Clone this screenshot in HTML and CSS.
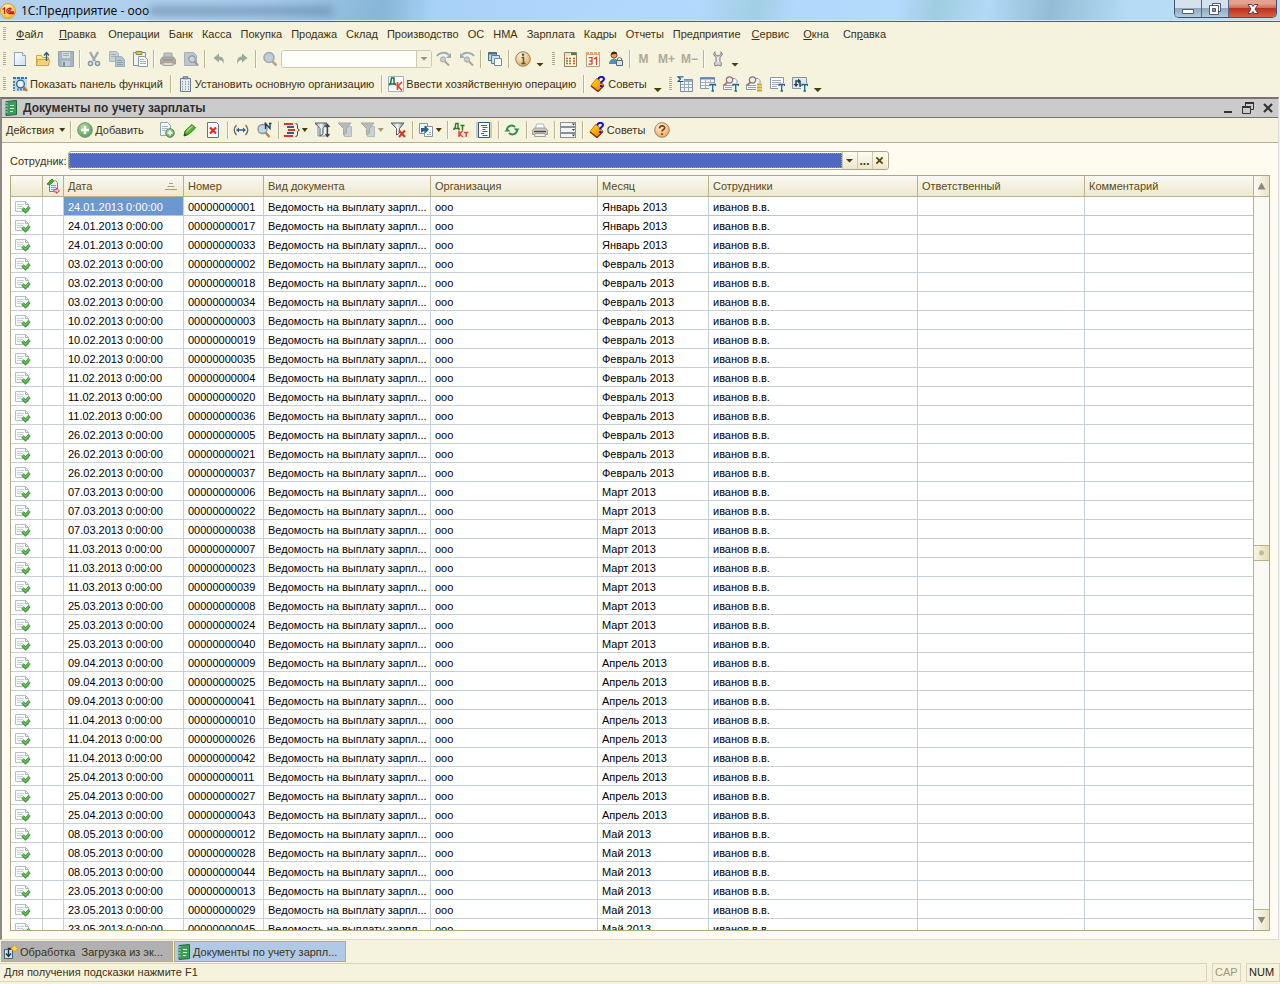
FILE: index.html
```html
<!DOCTYPE html>
<html lang="ru">
<head>
<meta charset="utf-8">
<title>1С:Предприятие - ооо</title>
<link rel="stylesheet" href="styles.css">
</head>
<body>
<svg class="sprite" aria-hidden="true">
  <defs>
    <linearGradient id="g-page" x1="0" y1="0" x2="1" y2="1"><stop offset="0" stop-color="#fff"/><stop offset="1" stop-color="#cfe0ef"/></linearGradient>
    <linearGradient id="g-folder" x1="0" y1="0" x2="0" y2="1"><stop offset="0" stop-color="#fdf0a8"/><stop offset="1" stop-color="#ecc25c"/></linearGradient>
    <radialGradient id="g-orange" cx=".4" cy=".3" r=".8"><stop offset="0" stop-color="#fff3dc"/><stop offset="1" stop-color="#ee9c4c"/></radialGradient>
    <radialGradient id="g-green" cx=".4" cy=".3" r=".8"><stop offset="0" stop-color="#b4dca4"/><stop offset="1" stop-color="#4f9a46"/></radialGradient>
    <radialGradient id="g-logo" cx=".4" cy=".3" r=".8"><stop offset="0" stop-color="#fff9b0"/><stop offset="1" stop-color="#f5b42a"/></radialGradient>
    <linearGradient id="g-book" x1="0" y1="0" x2="1" y2="1"><stop offset="0" stop-color="#ffe600"/><stop offset="1" stop-color="#ff6a00"/></linearGradient>
    <linearGradient id="g-fun" x1="0" y1="0" x2="1" y2="0"><stop offset="0" stop-color="#8f979c"/><stop offset=".5" stop-color="#f4f6f6"/><stop offset="1" stop-color="#747c82"/></linearGradient>
  </defs>
  <symbol id="i-logo" viewBox="0 0 16 16"><circle cx="8" cy="8" r="7.5" fill="url(#g-logo)" stroke="#d99a3a"/><path d="M2.5 6.5l2-1.5v6M11.5 6.3a2.6 2.6 0 1 0-1.5 4.2h4.5M10.5 7.6a1 1 0 1 0-.5 1.4h4" fill="none" stroke="#d8151b" stroke-width="1.3"/></symbol>
  <symbol id="i-new" viewBox="0 0 16 16"><path d="M2.500 1.500h8l3 3v10h-11z" fill="url(#g-page)" stroke="#8ba5bd"/><path d="M10.500 1.500v3h3" fill="#eef5fa" stroke="#8ba5bd"/><path d="M2 14.500h12" stroke="#56748f"/></symbol>
  <symbol id="i-open" viewBox="0 0 16 16"><path d="M1.500 14.500v-10h5l1 2h6v8z" fill="url(#g-folder)" stroke="#cfa348"/><path d="M1.500 14.500l1-6h12l-1 6z" fill="#f5d477" stroke="#d0a546"/><path d="M11.500 10V2M9 4.500L11.500 1.500 14 4.500" fill="none" stroke="#315b77" stroke-width="1.300"/></symbol>
  <symbol id="i-save" viewBox="0 0 16 16"><path d="M.500.500h15v15h-14l-1-1z" fill="#a6b5c0" stroke="#93a2af"/><path d="M4 1h8v6H4z" fill="#d8dddb"/><path d="M5 2.500h6M5 4.500h6" stroke="#9cabb5"/><path d="M4 10h8v5H4z" fill="#c5ced2"/><path d="M5 11h2v4H5z" fill="#7f909d"/></symbol>
  <symbol id="i-cut" viewBox="0 0 16 16"><path d="M4 1l5 9M12 1L7 10" stroke="#9aa8b2" stroke-width="2.200"/><circle cx="4.500" cy="12.500" r="2" fill="none" stroke="#8397a8" stroke-width="1.600"/><circle cx="11.500" cy="12.500" r="2" fill="none" stroke="#8397a8" stroke-width="1.600"/></symbol>
  <symbol id="i-copy" viewBox="0 0 16 16"><path d="M.500.500h7l2 2v8h-9z" fill="#c6d0d5" stroke="#aab7c0"/><path d="M2 3.500h5M2 5.500h5" stroke="#a2b0ba"/><path d="M6.500 5.500h6l3 3v7h-9z" fill="#b7c3cc" stroke="#9dacb8"/><path d="M8 9.500h5M8 11.500h6M8 13.500h6" stroke="#8da0af"/></symbol>
  <symbol id="i-paste" viewBox="0 0 16 16"><path d="M1.500 1.500h12v13h-12z" fill="#eef3f5" stroke="#7892a6"/><path d="M4 .500h6v3H4z" fill="#d9c64b" stroke="#8d8742"/><path d="M6.500 5.500h6l3 3v7h-9z" fill="#fff" stroke="#7f9cb4"/><path d="M8 8.500h4M8 10.500h6M8 12.500h6" stroke="#9fb5c5"/></symbol>
  <symbol id="i-print-off" viewBox="0 0 16 16"><path d="M4 2h8v5H4z" fill="#bcc5cc" stroke="#9daab3"/><path d="M2.500 6h11l2 3v4H.500V9z" fill="#b3aaa2" stroke="#a29c96"/><path d="M3 9h10" stroke="#8c8985"/><path d="M3 11.500h10v3H3z" fill="#d9d9d3" stroke="#a5a49f"/></symbol>
  <symbol id="i-preview" viewBox="0 0 16 16"><path d="M1.500 1.500h9l3 3v10h-12z" fill="#bcc6cc" stroke="#a5b2bb"/><circle cx="9" cy="8" r="3.200" fill="#ced6da" stroke="#8e9cab" stroke-width="1.200"/><path d="M11.500 10.500l3.500 4" stroke="#b39486" stroke-width="2"/></symbol>
  <symbol id="i-undo" viewBox="0 0 16 16"><path d="M2.500 7L8 2.500v3c4 0 5.500 3 4.500 7.500C12 10 10.500 9 8 9v2.500z" fill="#98ab9b"/></symbol>
  <symbol id="i-redo" viewBox="0 0 16 16"><path d="M13.500 7L8 2.500v3c-4 0-5.500 3-4.500 7.500C4 10 5.500 9 8 9v2.500z" fill="#98ab9b"/></symbol>
  <symbol id="i-find" viewBox="0 0 16 16"><circle cx="7" cy="6.500" r="5" fill="#bccddb" stroke="#a3a9af" stroke-width="1.600"/><path d="M10.500 10.500l4 4" stroke="#bba090" stroke-width="2.500"/></symbol>
  <symbol id="i-findnext" viewBox="0 0 16 16"><path d="M1 5c3-4 9-4 12-1" fill="none" stroke="#9cadb0" stroke-width="2"/><path d="M15 2v5h-5z" fill="#9cadb0"/><circle cx="7" cy="8.500" r="2.600" fill="#c1cdd3" stroke="#a0a9ae"/><path d="M9 10.500l4 4" stroke="#b9a190" stroke-width="2"/></symbol>
  <symbol id="i-findprev" viewBox="0 0 16 16"><path d="M15 5C12 1 6 1 3 4" fill="none" stroke="#9cadb0" stroke-width="2"/><path d="M1 2v5h5z" fill="#9cadb0"/><circle cx="8" cy="8.500" r="2.600" fill="#c1cdd3" stroke="#a0a9ae"/><path d="M10 10.500l4 4" stroke="#b9a190" stroke-width="2"/></symbol>
  <symbol id="i-windows" viewBox="0 0 16 16"><path d="M1.500 1.500h8v8h-8z" fill="#bed4e5" stroke="#4d708a"/><path d="M1 2.500h9" stroke="#4d708a" stroke-width="2"/><path d="M4.500 4.500h8v8h-8z" fill="#d1e2ee" stroke="#56809b"/><path d="M7.500 7.500h7v7h-7z" fill="#fff" stroke="#6b8ba4"/></symbol>
  <symbol id="i-info" viewBox="0 0 16 16"><circle cx="8" cy="8" r="7.300" fill="url(#g-orange)" stroke="#8e8a62"/><path d="M6.500 6.500H8.500v6M6.300 12.500h4.200" fill="none" stroke="#356832" stroke-width="1.500"/><circle cx="8" cy="3.800" r="1.200" fill="#356832"/></symbol>
  <symbol id="i-calc" viewBox="0 0 16 16"><path d="M2.500 1.500h12v14h-12z" fill="#fff4d6" stroke="#8c8262"/><path d="M3 2h11v3H3z" fill="#e9e2c4"/><path d="M9 2h5v2H9z" fill="#3e8a35"/><path d="M4 7.500h6M4 10h6M4 12.500h6" stroke="#a56d35" stroke-width="1.500" stroke-dasharray="2 1"/><path d="M11 7.500h2M11 10h2M11 12.500h2" stroke="#dc4c24" stroke-width="1.500"/></symbol>
  <symbol id="i-cal" viewBox="0 0 16 16"><path d="M1.500 1.500h13v14h-13z" fill="#fffdf5" stroke="#b29d79"/><path d="M1 1h14v3H1z" fill="#eba36c"/><path d="M4.500 0v3M8.500 0v3M12.500 0v3" stroke="#fff"/><path d="M3.500 6.600h3.500v7M4.500 10H7M3.500 13.200H7M9 8l2.500-1.500V14" fill="none" stroke="#e23c1e" stroke-width="1.300"/></symbol>
  <symbol id="i-user" viewBox="0 0 16 16"><circle cx="6" cy="4" r="3" fill="#efa44c" stroke="#7b4d2a"/><path d="M3 4c0-4 6-4 6-1-3 0-4 0-6 1" fill="#3b2a1c"/><path d="M1 13c0-7 10-7 10 0z" fill="#548fae"/><path d="M8.500 9.500h6v5h-6z" fill="#dbe4ee" stroke="#52687f"/><path d="M9.500 9V7.500q2-2 4 0V9" fill="none" stroke="#52687f"/></symbol>
  <symbol id="i-wrench" viewBox="0 0 16 16"><path d="M5 .800L3.500 3.500 6 6.500v4L4.500 12l.500 3 3-1 3 1 .500-3-1.500-1.500v-4l2.500-3L11 .800V3.500L8 5 5 3.500z" fill="#d4d6d4" stroke="#7e8382"/><path d="M8 6v5" stroke="#fff"/></symbol>
  <symbol id="i-panel" viewBox="0 0 16 16"><path d="M1 1h14v14H1z" fill="#bfd9ee"/><path d="M1 2h14" stroke="#2d74c5" stroke-width="2" stroke-dasharray="3 1"/><path d="M2 5v10M5 13.500h9" stroke="#4b83b7" stroke-width="2" stroke-dasharray="2 1"/><circle cx="8.500" cy="8" r="3.800" fill="#e7f3fc" stroke="#31608d" stroke-width="1.300"/><path d="M11.500 11l3.500 4" stroke="#c8722f" stroke-width="2.200"/></symbol>
  <symbol id="i-org" viewBox="0 0 16 16"><path d="M3.500 2.500h10v13h-10z" fill="#e9edf2" stroke="#697a8c"/><path d="M6 .800h5v2H6z" fill="#a8b2bd" stroke="#697a8c"/><path d="M5.500 5v9M8.500 5v9M11.500 5v9" stroke="#8b9dad" stroke-dasharray="1.500 1"/></symbol>
  <symbol id="i-dk" viewBox="0 0 16 16"><path d="M.500.500h15v15H.500z" fill="#fff" stroke="#9cb2cb"/><path d="M1.500 9.500V8h6v1.500M2.500 8L3.500 2h2.500v6" fill="none" stroke="#1d7130" stroke-width="1.500"/><path d="M9.500 6v8M14 6l-4 4 4 4.500" fill="none" stroke="#ef3c2c" stroke-width="1.700"/></symbol>
  <symbol id="i-tips" viewBox="0 0 16 16"><path d="M1 9.500L7 2l7 7-5.500 6.500z" fill="url(#g-book)" stroke="#d07a10"/><path d="M1 10l7 5.500 6-6" fill="none" stroke="#7c2d00" stroke-width="1.300"/><path d="M8.500 3.500C8.500 0 14 0 14 3c0 2-3 2-3 4.500" fill="none" stroke="#1410dd" stroke-width="2"/><path d="M10 9h2.400v2H10z" fill="#1410dd"/></symbol>
  <symbol id="i-tab-sum" viewBox="0 0 16 16"><path d="M3.500 3.500h12v12h-12z" fill="#f2f5f8" stroke="#7d8da0"/><path d="M4 4h11v2H4z" fill="#98abc0"/><path d="M7.500 5v10M11.500 5v10M4 8.500h11M4 11.500h11" stroke="#9aabba"/><path d="M0 0h7v6H0z" fill="#f5f2dd"/><path d="M6.500.800H1L3.500 3 1 5.500h5.500" fill="none" stroke="#186091" stroke-width="1.200"/></symbol>
  <symbol id="i-tab-t" viewBox="0 0 16 16"><path d="M.500 1.500h14v11h-14z" fill="#f5f7f9" stroke="#8796a8"/><path d="M0 2.500h15" stroke="#6389b1" stroke-width="2"/><path d="M5.500 4v8M10.500 4v8M1 6.500h13M1 9.500h13" stroke="#a4b2c0"/><use href="#p-t"/></symbol>
  <symbol id="p-t" viewBox="0 0 16 16"><path d="M9 7h7v9H9z" fill="#f5f2dd"/><path d="M10 10V8.500h5.500V10M12.700 8.500v6.500M11.500 15h2.500" fill="none" stroke="#1c6795" stroke-width="1.300"/></symbol>
  <symbol id="i-find-t" viewBox="0 0 16 16"><path d="M3 2.500h9l2 2v9H.500v-5" fill="#f7f8f8" stroke="#8a93a0"/><path d="M2 9.500h10M2 11.500h10" stroke="#98a5b2"/><circle cx="6.500" cy="4" r="3.200" fill="#e6eef4" stroke="#9a6f6a" stroke-width="1.200"/><path d="M4 6.500L1 9.500" stroke="#a6756b" stroke-width="1.800"/><use href="#p-t"/></symbol>
  <symbol id="i-find-l" viewBox="0 0 16 16"><path d="M3 2.500h9l2 2v9H.500v-5" fill="#f7f8f8" stroke="#8a93a0"/><path d="M2 9.500h8M2 11.500h8" stroke="#98a5b2"/><circle cx="6.500" cy="4" r="3.200" fill="#e6eef4" stroke="#9a6f6a" stroke-width="1.200"/><path d="M4 6.500L1 9.500" stroke="#a6756b" stroke-width="1.800"/><path d="M10 7h6v9h-6z" fill="#f5f2dd"/><path d="M11 8.500h5M11 11.500h5M11 14.500h5" stroke="#cfa222" stroke-width="2"/></symbol>
  <symbol id="i-doc-t" viewBox="0 0 16 16"><path d="M1.500 1.500h13v11h-13z" fill="#fff" stroke="#8a93a0"/><path d="M3 4.500h9M3 6.500h9M3 8.500h6M3 10.500h5" stroke="#a2aeb9"/><use href="#p-t"/></symbol>
  <symbol id="i-swap-t" viewBox="0 0 16 16"><path d="M.500 1.500h14v11H.500z" fill="#e3e8ec" stroke="#8a93a0"/><path d="M4 9V5h2.500M8 5v5h3" fill="none" stroke="#20405c" stroke-width="1.500"/><path d="M6 2.500L9 5 6 7.500zM1.500 8h5L4 11z" fill="#20405c"/><use href="#p-t"/></symbol>
  <symbol id="i-journal" viewBox="0 0 16 16"><path d="M3 1.500L13.500.500v14L3 15.500z" fill="#3d9d58" stroke="#21693a"/><path d="M2.500 3h2M2.500 6h2M2.500 9h2M2.500 12h2" stroke="#d5e6d9"/><path d="M7 5.500h4M7 8.500h4M7 11.500h3" stroke="#d8f3db" stroke-width="1.200"/></symbol>
  <symbol id="i-add" viewBox="0 0 16 16"><circle cx="8" cy="8" r="7.300" fill="url(#g-green)" stroke="#74937a"/><path d="M8 4v8M4 8h8" stroke="#fff" stroke-width="2.400"/></symbol>
  <symbol id="i-addcopy" viewBox="0 0 16 16"><path d="M1.500.500h7l3 3v10h-10z" fill="#f3f7f8" stroke="#8fa4b2"/><path d="M3 4.500h6M3 6.500h6M3 8.500h4" stroke="#a9bac4"/><circle cx="11" cy="11" r="4.300" fill="url(#g-green)" stroke="#5c8c5e"/><path d="M11 8.500v5M8.500 11h5" stroke="#fff" stroke-width="1.500"/></symbol>
  <symbol id="i-edit" viewBox="0 0 16 16"><path d="M3 9l7-6.500 3.500 3.500-7 6.500-4.500 1.500z" fill="#57b42d" stroke="#2c7417"/><path d="M4.500 9.500L10.500 4" stroke="#aee087" stroke-width="1.300"/><path d="M2 14l.600-2.500 2 1.500z" fill="#233"/></symbol>
  <symbol id="i-del" viewBox="0 0 16 16"><path d="M2.500.500h9l2 2v13h-11z" fill="#f8fafc" stroke="#53769a"/><path d="M5 5.500l6 6M11 5.500l-6 6" stroke="#e0281e" stroke-width="2.200"/></symbol>
  <symbol id="i-interval" viewBox="0 0 16 16"><path d="M3.500 3Q-1 8 3.500 13M12.500 3q4.500 5 0 10" fill="none" stroke="#666b62" stroke-width="1.300"/><path d="M4 8h8" stroke="#32608b" stroke-width="1.500"/><path d="M6 5.500v5L3 8zM10 5.500v5L13 8z" fill="#32608b"/></symbol>
  <symbol id="i-findn" viewBox="0 0 16 16"><circle cx="6.500" cy="7" r="4.500" fill="#bad9ea" stroke="#91939a" stroke-width="1.300"/><path d="M9.500 10.500l4 4.500" stroke="#bf7c55" stroke-width="2.300"/><path d="M9.500 7V1.500l4.500 5V1M8.500 1.500h2M13 1.500h2.500" fill="none" stroke="#223a55" stroke-width="1.300"/></symbol>
  <symbol id="i-hier" viewBox="0 0 16 16"><path d="M0 2h9M4 8h7M0 14h9" stroke="#df3125" stroke-width="2"/><path d="M3 5h7M3 11h7" stroke="#315f87" stroke-width="2"/><path d="M11.500 1.500q2 0 2 2v3l2 1.500-2 1.500v3q0 2-2 2" fill="none" stroke="#3d3f3b"/></symbol>
  <symbol id="i-filter" viewBox="0 0 16 16"><path d="M1 2h12v12H4V5" fill="#edf2f4" stroke="#7791a6"/><path d="M1 1h12L9 6.500V12l-3 2V6.500z" fill="url(#g-fun)" stroke="#535e66"/><path d="M13.500 3v11M11.500 5l2-2.500 2 2.500M11.500 12l2 2.500 2-2.500" fill="none" stroke="#38434c" stroke-width="1.300"/></symbol>
  <symbol id="i-filter-off" viewBox="0 0 16 16"><path d="M7.500 4.500h7v10h-7z" fill="#cbd1d2" stroke="#b1bbc0"/><path d="M1 1h13L9.500 6.500V11l-3 2V6.500z" fill="#b5bbbb" stroke="#a3abae"/></symbol>
  <symbol id="i-filter-x" viewBox="0 0 16 16"><path d="M1 1h13L9.500 6.500V11l-3 2V6.500z" fill="url(#g-fun)" stroke="#535e66"/><path d="M9 8.500l6 6.500M15 8.500L9 15" stroke="#d83224" stroke-width="2"/></symbol>
  <symbol id="i-move" viewBox="0 0 16 16"><path d="M1.500 1.500h8v10h-8z" fill="#eef4f8" stroke="#8295a4"/><path d="M6.500 4.500h8v10h-8z" fill="#fff" stroke="#8295a4"/><path d="M9 12.500h4M11 10.500h2" stroke="#9cafbe"/><path d="M3 6h4V3.500L11 7.500 7 11.500V9C5 9 4 10 3 11z" fill="#28628f"/></symbol>
  <symbol id="i-dtkt" viewBox="0 0 16 16"><path d="M1 8V6.500h5V8M2 6.500l.800-5H5v5M7.500 3.500h4M9.500 3.500V8" fill="none" stroke="#28781f" stroke-width="1.400"/><path d="M6 8.500v6.500M10 8.500L6.500 12l3.500 3M11 10.500h4.500M13.200 10.500v4.500" fill="none" stroke="#f04335" stroke-width="1.500"/></symbol>
  <symbol id="i-list" viewBox="0 0 16 16"><path d="M0 0h16v16H0z" fill="#c9c9c5"/><path d="M2.500.500h11v15h-11z" fill="#f5fbff" stroke="#395b78"/><path d="M5 3.500h6M6.500 5.500h5M6.500 7.500h3M6.500 9.500h5M5 11.500h3M6.500 13.500h5" stroke="#216c98" stroke-width="1.200"/></symbol>
  <symbol id="i-refresh" viewBox="0 0 16 16"><path d="M3 8c0-4 5-6 8-3M13 8c0 4-5 6-8 3" fill="none" stroke="#2d8b4b" stroke-width="1.800"/><path d="M9.500 6.500h6L13 9.500zM6.500 9.500h-6L3 6.500z" fill="#2d8b4b"/></symbol>
  <symbol id="i-print" viewBox="0 0 16 16"><path d="M4.500 2h7l1 4.500h-9z" fill="#fff" stroke="#a9b8c3"/><path d="M2.500 6h11l2 2.500v4H.500v-4z" fill="#cfcac2" stroke="#a09b93"/><path d="M2 9.500h12" stroke="#55524e" stroke-width="1.500"/><path d="M3 11.500h10l.500 3h-11z" fill="#f0f0ec" stroke="#a09f99"/></symbol>
  <symbol id="i-rows" viewBox="0 0 16 16"><path d="M0 0h16v16H0z" fill="#8a8f93"/><path d="M1 1h14v3H1zM1 6h14v4H1zM1 12h14v3H1z" fill="#f2f4f5"/><path d="M12 1.500h3l-1.500 2zM12 7h3l-1.500 2zM12 12.500h3l-1.500 2z" fill="#30363b"/></symbol>
  <symbol id="i-help" viewBox="0 0 16 16"><circle cx="8" cy="8" r="7.300" fill="url(#g-orange)" stroke="#a18468"/><path d="M5.500 6.500c0-3.500 5.200-3.200 5.200-.700C10.700 7.500 8 7.500 8 9.500" fill="none" stroke="#7c3d16" stroke-width="1.600"/><circle cx="8" cy="12" r="1.100" fill="#7c3d16"/></symbol>
  <symbol id="i-state" viewBox="0 0 14 16"><path d="M3.500 2.500h6l2 2v9h-8z" fill="#e5f1fa" stroke="#4d8fbc"/><path d="M5 7.500h5M5 9.500h5M5 11.500h3" stroke="#6da0c4"/><path d="M1 6l5-5 2 2-4.500 4z" fill="#49ad2c" stroke="#3a8a2a"/><path d="M7 3l2-1.500L10 4z" fill="#f4d336"/><path d="M8 11.500h2.500V10l3 2.800-3 2.700V14H8z" fill="#fcc3cc" stroke="#d8425d"/></symbol>
  <symbol id="i-doc" viewBox="0 0 16 14"><path d="M.500 1.500h10l3 3v7H.500z" fill="#fafbfb" stroke="#b4c0c8"/><path d="M10.500 1.500v3h3" fill="none" stroke="#a6b4bd"/><path d="M2 4.500h7M2 6.500h6M2 8.500h5" stroke="#c6d0d6"/><path d="M7.500 8.500l3 3 4-4.500" fill="none" stroke="#3d9236" stroke-width="3.200"/><path d="M7.500 8.300l3 3 4-4.500" fill="none" stroke="#6cc25a" stroke-width="1.400"/></symbol>
  <symbol id="i-proc" viewBox="0 0 16 16"><path d="M1.500 5.500h8v9h-8z" fill="#d6e2ec" stroke="#3f627d"/><path d="M5.500 12V4.500H9M3 9.500l2.500 3 2.500-3" fill="none" stroke="#1f3444" stroke-width="1.400"/><path d="M11.500 1L15 4.500 11.500 8 8 4.500z" fill="#ffd83a" stroke="#c69c1e"/></symbol>
  <symbol id="i-sort" viewBox="0 0 12 8"><path d="M4 1.500h4M2.500 4.500h7M0 7.500h12" stroke="#a99f6c" stroke-width="1"/></symbol>
  <symbol id="i-min" viewBox="0 0 12 12"><path d="M2 10h8" stroke="#333" stroke-width="2"/></symbol>
  <symbol id="i-restore" viewBox="0 0 12 12"><path d="M3.500 4V1.500h8v6H8.500" fill="none" stroke="#333"/><path d="M3 1h9" stroke="#333" stroke-width="2"/><path d="M.500 4.500h8v7h-8z" fill="none" stroke="#333"/><path d="M0 5h9" stroke="#333" stroke-width="2"/></symbol>
  <symbol id="i-close" viewBox="0 0 12 12"><path d="M2 2l8 8M10 2l-8 8" stroke="#333" stroke-width="2.200"/></symbol>
  <symbol id="i-wmin" viewBox="0 0 14 12"><path d="M1.500 6.500h11v4h-11z" fill="#fff" stroke="#4e5b70"/></symbol>
  <symbol id="i-wrest" viewBox="0 0 14 12"><path d="M4.500.500h8v8h-8z" fill="#fff" stroke="#4e5b70"/><path d="M1.500 2.500h9v9h-9z" fill="#fff" stroke="#4e5b70"/><path d="M4.500 5.500h3v3h-3z" fill="#8199b2" stroke="#4e5b70"/></symbol>
  <symbol id="i-wclose" viewBox="0 0 14 12"><path d="M2 1.500h3.500L7 3.500l1.500-2H12L9 6l3 4.500H8.500L7 8.500l-1.500 2H2L5 6z" fill="#fff" stroke="#5a3a44"/></symbol>
</svg>

<header class="titlebar">
  <svg class="icon"><use href="#i-logo"/></svg>
  <h1 class="titlebar-text">1С:Предприятие - ооо</h1>
  <span class="titlebar-ghost" aria-hidden="true"></span>
  <div class="window-buttons">
    <button class="wbtn" aria-label="Свернуть"><svg><use href="#i-wmin"/></svg></button>
    <button class="wbtn" aria-label="Восстановить"><svg><use href="#i-wrest"/></svg></button>
    <button class="wbtn wbtn-close" aria-label="Закрыть"><svg><use href="#i-wclose"/></svg></button>
  </div>
</header>

<nav class="menubar">
  <span class="grip"></span>
  <button class="menu menu-key"><u>Ф</u>айл</button>
  <button class="menu menu-key"><u>П</u>равка</button>
  <button class="menu">Операции</button>
  <button class="menu">Банк</button>
  <button class="menu">Касса</button>
  <button class="menu">Покупка</button>
  <button class="menu">Продажа</button>
  <button class="menu">Склад</button>
  <button class="menu">Производство</button>
  <button class="menu">ОС</button>
  <button class="menu">НМА</button>
  <button class="menu">Зарплата</button>
  <button class="menu">Кадры</button>
  <button class="menu">Отчеты</button>
  <button class="menu">Предприятие</button>
  <button class="menu menu-service"><u>С</u>ервис</button>
  <button class="menu menu-service"><u>О</u>кна</button>
  <button class="menu menu-service">Сп<u>р</u>авка</button>
</nav>

<div class="toolbar" role="toolbar" aria-label="Стандартная">
  <span class="grip"></span>
  <button class="tool" aria-label="Новый"><svg class="icon"><use href="#i-new"/></svg></button>
  <button class="tool" aria-label="Открыть"><svg class="icon"><use href="#i-open"/></svg></button>
  <button class="tool" aria-label="Сохранить"><svg class="icon"><use href="#i-save"/></svg></button>
  <span class="sep"></span>
  <button class="tool" aria-label="Вырезать"><svg class="icon"><use href="#i-cut"/></svg></button>
  <button class="tool" aria-label="Копировать"><svg class="icon"><use href="#i-copy"/></svg></button>
  <button class="tool" aria-label="Вставить"><svg class="icon"><use href="#i-paste"/></svg></button>
  <span class="sep"></span>
  <button class="tool" aria-label="Печать"><svg class="icon"><use href="#i-print-off"/></svg></button>
  <button class="tool" aria-label="Просмотр"><svg class="icon"><use href="#i-preview"/></svg></button>
  <span class="sep"></span>
  <button class="tool" aria-label="Отменить"><svg class="icon"><use href="#i-undo"/></svg></button>
  <button class="tool" aria-label="Вернуть"><svg class="icon"><use href="#i-redo"/></svg></button>
  <span class="sep"></span>
  <button class="tool" aria-label="Найти"><svg class="icon"><use href="#i-find"/></svg></button>
  <span class="search"><select aria-label="Строка поиска"><option></option></select></span>
  <button class="tool" aria-label="Найти следующий"><svg class="icon"><use href="#i-findnext"/></svg></button>
  <button class="tool" aria-label="Найти предыдущий"><svg class="icon"><use href="#i-findprev"/></svg></button>
  <span class="sep"></span>
  <button class="tool" aria-label="Окна"><svg class="icon"><use href="#i-windows"/></svg></button>
  <span class="sep"></span>
  <button class="tool" aria-label="Справка"><svg class="icon"><use href="#i-info"/></svg></button>
  <button class="more" aria-label="Ещё"></button>
  <span class="grip grip-inner"></span>
  <button class="tool" aria-label="Калькулятор"><svg class="icon"><use href="#i-calc"/></svg></button>
  <button class="tool" aria-label="Календарь"><svg class="icon"><use href="#i-cal"/></svg></button>
  <button class="tool" aria-label="Пользователи"><svg class="icon"><use href="#i-user"/></svg></button>
  <span class="sep"></span>
  <button class="tool memory" disabled>M</button>
  <button class="tool memory" disabled>M+</button>
  <button class="tool memory" disabled>M−</button>
  <span class="sep"></span>
  <button class="tool" aria-label="Настройка"><svg class="icon"><use href="#i-wrench"/></svg></button>
  <button class="more" aria-label="Ещё"></button>
</div>

<div class="toolbar toolbar-functions" role="toolbar" aria-label="Функции">
  <span class="grip"></span>
  <button class="labeled"><svg class="icon"><use href="#i-panel"/></svg>Показать панель функций</button>
  <span class="sep"></span>
  <button class="labeled"><svg class="icon"><use href="#i-org"/></svg>Установить основную организацию</button>
  <span class="sep"></span>
  <button class="labeled"><svg class="icon"><use href="#i-dk"/></svg>Ввести хозяйственную операцию</button>
  <span class="sep"></span>
  <button class="labeled"><svg class="icon"><use href="#i-tips"/></svg>Советы</button>
  <button class="more" aria-label="Ещё"></button>
  <span class="grip"></span>
  <button class="tool" aria-label="Итоги"><svg class="icon"><use href="#i-tab-sum"/></svg></button>
  <button class="tool" aria-label="Таблица"><svg class="icon"><use href="#i-tab-t"/></svg></button>
  <button class="tool" aria-label="Анализ"><svg class="icon"><use href="#i-find-t"/></svg></button>
  <button class="tool" aria-label="Карточка"><svg class="icon"><use href="#i-find-l"/></svg></button>
  <button class="tool" aria-label="Отчет"><svg class="icon"><use href="#i-doc-t"/></svg></button>
  <button class="tool" aria-label="Обороты"><svg class="icon"><use href="#i-swap-t"/></svg></button>
  <button class="more" aria-label="Ещё"></button>
</div>

<main class="child">
  <header class="child-title">
    <svg class="icon"><use href="#i-journal"/></svg>
    <h2>Документы по учету зарплаты</h2>
    <button aria-label="Свернуть"><svg><use href="#i-min"/></svg></button>
    <button aria-label="Восстановить"><svg><use href="#i-restore"/></svg></button>
    <button aria-label="Закрыть"><svg><use href="#i-close"/></svg></button>
  </header>

  <div class="toolbar commands" role="toolbar" aria-label="Команды">
    <button class="labeled actions">Действия<span class="caret"></span></button>
    <span class="sep"></span>
    <button class="labeled add"><svg class="icon"><use href="#i-add"/></svg><span><u>Д</u>обавить</span></button>
    <button class="tool" aria-label="Скопировать"><svg class="icon"><use href="#i-addcopy"/></svg></button>
    <button class="tool" aria-label="Изменить"><svg class="icon"><use href="#i-edit"/></svg></button>
    <button class="tool" aria-label="Пометить на удаление"><svg class="icon"><use href="#i-del"/></svg></button>
    <span class="sep"></span>
    <button class="tool" aria-label="Интервал"><svg class="icon"><use href="#i-interval"/></svg></button>
    <button class="tool" aria-label="Поиск по номеру"><svg class="icon"><use href="#i-findn"/></svg></button>
    <span class="sep"></span>
    <button class="tool tool-drop" aria-label="Сортировка"><svg class="icon"><use href="#i-hier"/></svg><span class="caret"></span></button>
    <button class="tool" aria-label="Отбор"><svg class="icon"><use href="#i-filter"/></svg></button>
    <button class="tool" aria-label="Отбор по значению"><svg class="icon"><use href="#i-filter-off"/></svg></button>
    <button class="tool tool-drop" aria-label="История отборов"><svg class="icon"><use href="#i-filter-off"/></svg><span class="caret caret-dim"></span></button>
    <button class="tool" aria-label="Отключить отбор"><svg class="icon"><use href="#i-filter-x"/></svg></button>
    <span class="sep"></span>
    <button class="tool tool-drop" aria-label="Ввести на основании"><svg class="icon"><use href="#i-move"/></svg><span class="caret"></span></button>
    <span class="sep"></span>
    <button class="tool" aria-label="Проводки"><svg class="icon"><use href="#i-dtkt"/></svg></button>
    <button class="tool" aria-label="Структура"><svg class="icon"><use href="#i-list"/></svg></button>
    <span class="sep"></span>
    <button class="tool" aria-label="Обновить"><svg class="icon"><use href="#i-refresh"/></svg></button>
    <span class="sep"></span>
    <button class="tool" aria-label="Печать"><svg class="icon"><use href="#i-print"/></svg></button>
    <span class="sep"></span>
    <button class="tool" aria-label="Настройка списка"><svg class="icon"><use href="#i-rows"/></svg></button>
    <span class="sep"></span>
    <button class="labeled"><svg class="icon"><use href="#i-tips"/></svg>Советы</button>
    <button class="tool" aria-label="Справка"><svg class="icon"><use href="#i-help"/></svg></button>
  </div>

  <div class="form">
    <div class="filter">
      <label for="employee">Сотрудник:</label>
      <div class="field">
        <input id="employee" type="text">
        <button aria-label="Выбрать из списка"><span class="caret"></span></button>
        <button>...</button>
        <button aria-label="Очистить"><svg viewBox="0 0 10 10"><path d="M1.500 1.500l7 7M8.500 1.500l-7 7" stroke="#5c4a08" stroke-width="2"/></svg></button>
      </div>
    </div>

    <div class="grid">
      <div class="grid-body">
        <table>
          <colgroup>
            <col class="c-icon"><col class="c-state"><col class="c-date"><col class="c-number"><col class="c-wide"><col class="c-wide"><col class="c-month"><col class="c-staff"><col class="c-wide"><col>
          </colgroup>
          <thead>
            <tr>
              <th scope="col" aria-label="Проведен"></th>
              <th scope="col" class="state" aria-label="Состояние"><svg><use href="#i-state"/></svg></th>
              <th scope="col"><span class="sorted">Дата<svg><use href="#i-sort"/></svg></span></th>
              <th scope="col">Номер</th>
              <th scope="col">Вид документа</th>
              <th scope="col">Организация</th>
              <th scope="col">Месяц</th>
              <th scope="col">Сотрудники</th>
              <th scope="col">Ответственный</th>
              <th scope="col">Комментарий</th>
            </tr>
          </thead>
          <tbody id="rows"></tbody>
        </table>
      </div>
      <div class="scroll">
        <button class="scroll-up" aria-label="Вверх"></button>
        <div class="track track-above"></div>
        <div class="thumb"></div>
        <div class="track track-below"></div>
        <button class="scroll-down" aria-label="Вниз"></button>
      </div>
    </div>
  </div>
</main>

<nav class="taskbar">
  <button class="task"><svg class="icon"><use href="#i-proc"/></svg><span>Обработка&nbsp; Загрузка из эк...</span></button>
  <button class="task task-active"><svg class="icon"><use href="#i-journal"/></svg><span>Документы по учету зарпл...</span></button>
</nav>

<footer class="status">
  <span class="status-text">Для получения подсказки нажмите F1</span>
  <span class="status-key status-off">CAP</span>
  <span class="status-key status-num">NUM</span>
</footer>
<script src="script.js"></script>
</body>
</html>
```

FILE: styles.css
```css
* { box-sizing: border-box; }

body {
  margin: 0;
  height: 100vh;
  display: flex;
  flex-direction: column;
  overflow: hidden;
  background: #f5f2dd;
  color: #3f3110;
  font: 11px/14px "Liberation Sans", Arial, sans-serif;
}

button, input, select {
  font: inherit;
  color: inherit;
  margin: 0;
  padding: 0;
  border: 0;
  background: none;
}

.sprite { position: absolute; width: 0; height: 0; }
.icon { width: 16px; height: 16px; flex: none; }
h1, h2 { margin: 0; font-size: inherit; }

/* window title */
.titlebar {
  flex: none;
  display: flex;
  align-items: center;
  height: 22px;
  border-bottom: 1px solid #4d5f70;
  box-shadow: inset 0 -1px #d8e8f4;
  background: linear-gradient(100deg, #b5d3ee 0, #a9cbea 20%, #86b6d8 30%, #a9d2f8 34%, #b4d9fe 54%, #a1cfe4 59%, #b2d8fb 62%, #b4dafc 70%, #9fcde0 73%, #b2d9f6 77%, #93bdd6 82%, #b5dbf5 88%, #bcdff2 100%);
}
.titlebar-text {
  padding-left: 5px;
  font: 12px/18px "Open Sans", "Noto Sans", sans-serif;
  color: #000;
  white-space: nowrap;
}
.titlebar-ghost {
  width: 184px;
  height: 8px;
  background: #5f84a6;
  opacity: .7;
  filter: blur(4px);
}
.window-buttons {
  display: flex;
  align-self: flex-start;
  margin-left: auto;
  margin-right: 3px;
  border: 1px solid #41506a;
  border-top: 0;
  border-radius: 0 0 5px 5px;
  overflow: hidden;
}
.wbtn {
  width: 27px;
  height: 17px;
  display: grid;
  place-items: center;
  border-right: 1px solid #56677e;
  background: linear-gradient(#d5e2ee 0 45%, #8fa9c0 50%, #b3cbdc);
}
.wbtn svg { width: 14px; height: 12px; }
.wbtn-close {
  width: 47px;
  border-right: 0;
  background: linear-gradient(#e3a28f 0 20%, #d1705a 45%, #b93220 50%, #d9603f);
}

/* menu */
.menubar { flex: none; display: flex; align-items: center; height: 24px; }
.menu { padding: 0 5px 0 4px; white-space: nowrap; }
.menu-key { padding: 0 8px; }
.menu-service { padding: 0 8px 0 6px; }
.grip {
  flex: none;
  width: 4px;
  height: 14px;
  margin: 0 1px 0 3px;
  background: repeating-linear-gradient(#b5ae8a 0 1px, transparent 1px 2px);
  border-right: 1px solid #f5f2dd;
}
.grip-inner { margin: 0 2px 0 4px; }

/* toolbars */
.toolbar { flex: none; display: flex; align-items: center; height: 25px; }
.toolbar-functions { height: 26px; }
.tool { flex: none; width: 23px; height: 22px; display: flex; align-items: center; justify-content: center; }
.tool-drop { width: 30px; gap: 2px; }
.sep {
  flex: none;
  width: 1px;
  height: 18px;
  margin: 0 2px;
  background: #bdb590;
  box-shadow: 1px 0 #fffdf2;
}
.labeled { display: flex; align-items: center; gap: 2px; padding: 0 5px 0 4px; white-space: nowrap; }
.memory { font-weight: bold; font-size: 12px; color: #b0a99a; }
.more {
  flex: none;
  width: 8px;
  height: 4px;
  margin: 12px 4px 0 2px;
  background: #4a3a0c;
  clip-path: polygon(0 0, 100% 0, 50% 100%);
}
.caret {
  flex: none;
  width: 6px;
  height: 4px;
  background: #4a3a0c;
  clip-path: polygon(0 0, 100% 0, 50% 100%);
}
.caret-dim { background: #a59c72; }
.search {
  width: 151px;
  height: 18px;
  display: flex;
  border: 1px solid #d2caaa;
  border-radius: 3px;
  overflow: hidden;
}
.search select {
  width: 100%;
  appearance: none;
  background:
    linear-gradient(#d2caaa, #d2caaa) no-repeat right 14px top / 1px 100%,
    linear-gradient(#f5f2dd, #f5f2dd) no-repeat right top / 14px 100%,
    #fffefb;
}
.search::after {
  content: "";
  flex: none;
  align-self: center;
  width: 8px;
  height: 4px;
  margin-left: -11px;
  margin-right: 3px;
  background: #9c9376;
  clip-path: polygon(0 0, 100% 0, 50% 100%);
  z-index: 1;
}

/* child window */
.child {
  flex: 1;
  min-height: 0;
  display: flex;
  flex-direction: column;
  margin-right: 1px;
  border: 1px solid #d9dbdf;
  border-top: 2px solid #77716f;
  border-left: 2px solid #8b8888;
  background: #fffbf0;
}
.child-title {
  flex: none;
  display: flex;
  align-items: center;
  height: 19px;
  padding: 0 4px 0 1px;
  gap: 8px;
  background: #cbcbcb;
  border-bottom: 1px solid #77716f;
}
.child-title h2 { flex: 1; margin-left: -4px; color: #2f2f2f; font-weight: bold; font-size: 12px; }
.child-title button { width: 12px; height: 12px; }
.child-title svg:not(.icon) { display: block; width: 12px; height: 12px; }
.commands { background: #f5f2dd; border-bottom: 1px solid #b9b18b; }
.commands .actions { gap: 5px; padding-right: 3px; }
.commands .add { padding-right: 12px; }

.form { flex: 1; min-height: 0; display: flex; flex-direction: column; padding: 8px 8px; gap: 5px; }
.filter { flex: none; display: flex; align-items: center; gap: 1px; }
.field {
  width: 821px;
  height: 19px;
  display: flex;
  padding: 0 1px 0 0;
  border: 1px solid #b0a880;
  border-radius: 3px;
  background: #fffefa;
}
.field input {
  flex: 1;
  min-width: 0;
  margin: 1px 0;
  background: #4f68c1;
  border: 1px dotted #b5a54f;
}
.field button {
  width: 15px;
  display: grid;
  place-items: center;
  border-left: 1px solid #d0c9a5;
  background: linear-gradient(#fdfcf4, #ece7cb);
  color: #4a3a0c;
  font-weight: bold;
  font-size: 12px;
}
.field svg { width: 9px; height: 9px; }
.field .caret { width: 8px; height: 4px; }

/* document list */
.grid { flex: 1; min-height: 0; display: flex; border: 1px solid #b0a880; background: #fff; }
.grid-body { flex: 1; min-width: 0; overflow: hidden; }
table { width: 100%; table-layout: fixed; border-collapse: separate; border-spacing: 0; color: #000; }
.c-icon { width: 32px; }
.c-state { width: 21px; }
.c-date { width: 120px; }
.c-number { width: 80px; }
.c-wide { width: 167px; }
.c-month { width: 111px; }
.c-staff { width: 209px; }
th, td {
  padding: 0 0 0 4px;
  text-align: left;
  white-space: nowrap;
  overflow: hidden;
}
th {
  height: 21px;
  font-weight: normal;
  color: #5b4a18;
  border-right: 1px solid #b9b18b;
  border-bottom: 1px solid #b9b18b;
  background: linear-gradient(#fbfaf4, #ede8cc);
}
td { height: 19px; padding-top: 2px; border-right: 1px solid #c6cfd5; border-bottom: 1px solid #c6cfd5; }
th:last-child, td:last-child { border-right: 0; }
th.state { padding: 0 3px; }
.state svg { display: block; width: 14px; height: 16px; }
.sorted { display: flex; align-items: center; justify-content: space-between; padding-right: 6px; }
.sorted svg { width: 12px; height: 8px; }
td svg { display: block; width: 16px; height: 14px; }
.current td { border-bottom-color: #aec7e6; }
.current .date { background: #6d97cf; color: #fff; }

.scroll { flex: none; width: 16px; display: flex; flex-direction: column; border-left: 1px solid #b9b18b; background: #faf9f4; }
.scroll button { flex: none; height: 21px; display: grid; place-items: center; background: linear-gradient(90deg, #fbfaf3, #e9e4c6); }
.scroll button::before { content: ""; width: 8px; height: 7px; background: #8b8780; clip-path: polygon(0 100%, 100% 100%, 50% 0); }
.scroll-up { border-bottom: 1px solid #b9b18b; }
.scroll .scroll-down { border-top: 1px solid #b9b18b; }
.scroll .scroll-down::before { clip-path: polygon(0 0, 100% 0, 50% 100%); }
.track-above, .track-below { flex: 1; }
.thumb {
  flex: none;
  height: 16px;
  border: solid #b9b18b;
  border-width: 1px 0;
  background: radial-gradient(circle at 50% 50%, #c3bd98 0 2px, transparent 3px), linear-gradient(90deg, #f8f6e6, #e2ddb4);
}

/* open windows and status line */
.taskbar { flex: none; display: flex; gap: 1px; margin-top: 1px; padding-left: 1px; }
.task {
  width: 172px;
  height: 21px;
  display: flex;
  align-items: center;
  gap: 1px;
  padding: 0 1px;
  border: 1px solid #b5ac80;
  background: #b1b1b1;
  white-space: nowrap;
}
.task-active { background: #b0cae6; }
.status { flex: none; display: flex; gap: 5px; margin-top: 1px; padding-bottom: 2px; }
.status-text { flex: 1; }
.status-text, .status-key { height: 19px; padding: 0 2px; line-height: 17px; border: 1px solid #dad5b8; }
.status-text { padding-left: 4px; border-left: 0; }
.status-key { width: 29px; color: #2b210b; }
.status-off { color: #a3976a; }
.status-num { width: 34px; }
```

FILE: script.js
```js
const dates = [
  ["24.01", "Январь"], ["03.02", "Февраль"], ["10.02", "Февраль"], ["11.02", "Февраль"],
  ["26.02", "Февраль"], ["07.03", "Март"], ["11.03", "Март"], ["25.03", "Март"],
  ["09.04", "Апрель"], ["11.04", "Апрель"], ["25.04", "Апрель"], ["08.05", "Май"], ["23.05", "Май"],
];

const rows = dates.flatMap(([day, month], i) =>
  [1, 17, 33].map((base) => {
    const number = String(base + i).padStart(11, "0");
    return `<tr>
      <td><svg role="img" aria-label="Проведен"><use href="#i-doc"/></svg></td><td></td>
      <td class="date">${day}.2013 0:00:00</td><td>${number}</td>
      <td>Ведомость на выплату зарпл...</td><td>ооо</td>
      <td>${month} 2013</td><td>иванов в.в.</td><td></td><td></td>
    </tr>`;
  })
);

const body = document.getElementById("rows");
body.innerHTML = rows.join("");
body.rows[0].classList.add("current");
```
